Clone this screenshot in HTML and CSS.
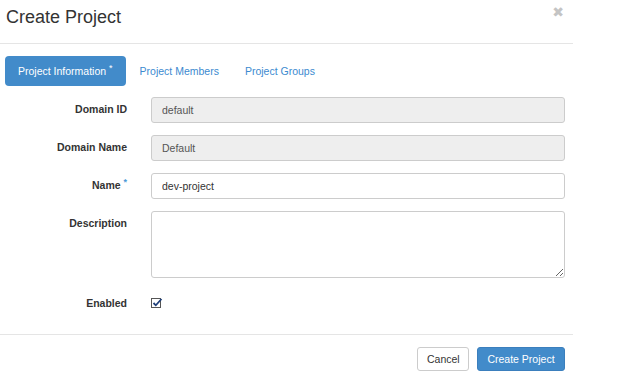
FILE: index.html
```html
<!DOCTYPE html>
<html lang="en">
<head>
  <meta charset="UTF-8" />
  <title>Create Project</title>
  <link rel="stylesheet" href="styles.css">
</head>
<body>
  <div class="modal">
    <div class="modal-header">
      <h3 class="modal-title">Create Project</h3>
      <span class="close">&#x2716;</span>
    </div>
    <div class="modal-body">
      <ul class="tabs">
        <li class="tab active">Project Information <sup class="req">*</sup></li>
        <li class="tab">Project Members</li>
        <li class="tab">Project Groups</li>
      </ul>
      <form class="form">
        <div class="row">
          <label class="label">Domain ID</label>
          <input class="input" type="text" value="default" disabled>
        </div>
        <div class="row">
          <label class="label">Domain Name</label>
          <input class="input" type="text" value="Default" disabled>
        </div>
        <div class="row">
          <label class="label">Name <sup class="req">*</sup></label>
          <input class="input" type="text" value="dev-project">
        </div>
        <div class="row">
          <label class="label">Description</label>
          <textarea class="input textarea"></textarea>
        </div>
        <div class="row row-check">
          <label class="label">Enabled</label>
          <svg class="check" width="12" height="11" viewBox="0 0 12 11">
            <rect x="0.5" y="1.5" width="9" height="9" fill="#fff" stroke="#555" stroke-width="1"/>
            <path d="M2.5 6 L4.8 8.3 L10.5 2" fill="none" stroke="#1f3f7a" stroke-width="1.8"/>
          </svg>
        </div>
      </form>
    </div>
    <div class="modal-footer">
      <button class="btn btn-default" type="button">Cancel</button>
      <button class="btn btn-primary" type="button">Create Project</button>
    </div>
  </div>
</body>
</html>
```
FILE: styles.css
```css
body, html {
  margin: 0;
  padding: 0;
  background: #fff;
  font-family: 'Liberation Sans', Arial, sans-serif;
  color: #333;
}
.modal {
  width: 573px;
}
.modal-header {
  height: 43px;
  border-bottom: 1px solid #e5e5e5;
  display: flex;
  justify-content: space-between;
  align-items: flex-start;
}
.modal-title {
  margin: 0;
  padding: 7px 0 0 6px;
  font-size: 18px;
  font-weight: normal;
  line-height: 20px;
  color: #333;
}
.close {
  margin: 4px 9px 0 0;
  font-size: 14px;
  font-weight: bold;
  color: #c4c4c4;
  font-family: 'DejaVu Sans', sans-serif;
}
.modal-body {
  padding: 12px 8px 0 5px;
}
.tabs {
  list-style: none;
  margin: 0;
  padding: 0;
  display: flex;
  font-size: 10.5px;
}
.tab {
  height: 30px;
  line-height: 30px;
  padding: 0 13px;
  color: #3c8ad0;
  border-radius: 4px;
  margin-right: 0;
}
.tab.active {
  background: #428bca;
  color: #fff;
  padding: 0 13px 0 13px;
  margin-right: 1px;
}
.tab.active .req {
  color: #fff;
}
.req {
  color: #4a9ad8;
  font-size: 9px;
  vertical-align: 4px;
  line-height: 0;
}
.form {
  margin-top: 11px;
  font-size: 10.5px;
}
.row {
  display: flex;
  align-items: flex-start;
  margin-bottom: 12px;
}
.label {
  width: 122px;
  text-align: right;
  font-weight: bold;
  padding-top: 5px;
  line-height: 15px;
  margin-right: 24px;
  color: #333;
}
.input {
  width: 414px;
  height: 26px;
  box-sizing: border-box;
  border: 1px solid #ccc;
  border-radius: 3px;
  padding: 0 10px;
  font-family: inherit;
  font-size: 10.5px;
  color: #333;
  background: #fff;
  margin: 0;
}
.input:disabled {
  background: #eee;
  color: #555;
}
.textarea {
  height: 67px;
  padding: 6px 10px;
  display: block;
}
.row-check {
  margin-top: 1px;
}
.row-check .label {
  padding-top: 6px;
}
.check {
  margin-top: 7px;
}
.modal-footer {
  margin-top: 23px;
  border-top: 1px solid #e5e5e5;
  padding: 12px 8px 0 0;
  display: flex;
  justify-content: flex-end;
  gap: 8px;
}
.btn {
  height: 24px;
  font-family: inherit;
  font-size: 10.5px;
  border-radius: 3px;
  border: 1px solid #ccc;
  padding: 0 9px;
  cursor: pointer;
}
.btn-default {
  background: #fff;
  color: #333;
  width: 52px;
}
.btn-primary {
  background: #428bca;
  border-color: #3b7fbd;
  color: #fff;
  width: 88px;
}
```
